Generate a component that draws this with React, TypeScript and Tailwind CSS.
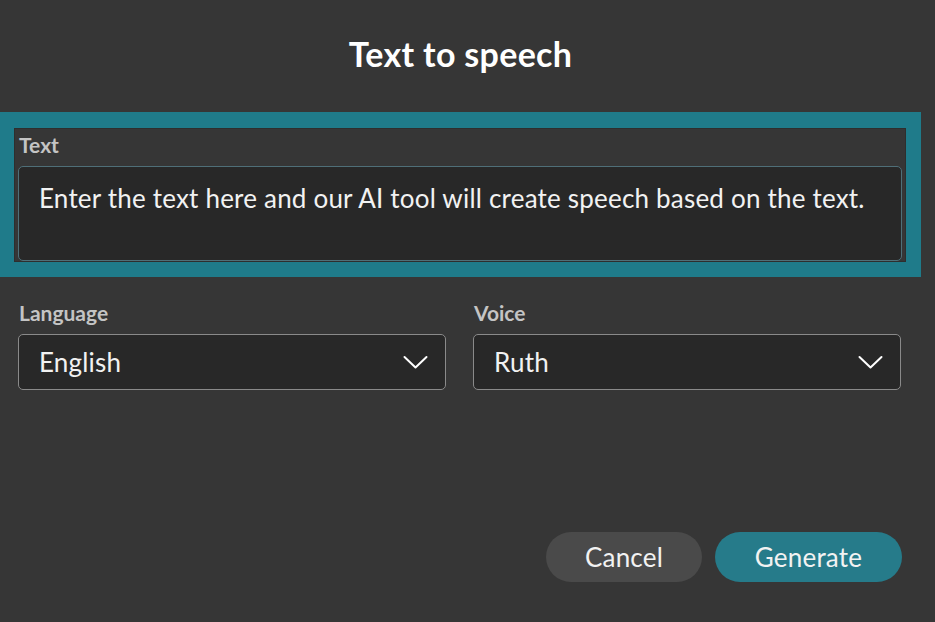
function Chevron() {
  return (
    <svg width="25" height="15" viewBox="0 0 25 15" fill="none" className="text-white">
      <polyline points="1.5,2 12.5,12.5 23.5,2" stroke="currentColor" strokeWidth="2" strokeLinecap="round" strokeLinejoin="round" />
    </svg>
  )
}

function Select({ label, value }: { label: string; value: string }) {
  return (
    <div className="flex w-[428px] flex-col">
      <span className="h-[37px] pl-px pt-[4px] text-[21px] font-bold leading-[24px] text-[#c4c4c4]">
        {label}
      </span>
      <div className="flex h-[56px] items-center justify-between rounded-[5px] border border-[#8a8a8a] bg-[#282828] pl-[20px] pr-[17px]">
        <span className="text-[26px] tracking-[0.2px] text-[#f2f2f2]">{value}</span>
        <Chevron />
      </div>
    </div>
  )
}

export default function App() {
  return (
    <div
      className="flex h-[622px] w-[935px] flex-col bg-[#363636]"
      style={{ fontFamily: 'Lato, "Noto Sans", sans-serif' }}
    >
      <div className="flex h-[112px] w-[921px] items-center justify-center pb-[6px]">
        <h1 className="text-[34px] font-bold tracking-[0.3px] text-white">Text to speech</h1>
      </div>

      <div className="w-[921px] bg-[#1f7b8a] pb-[15px] pl-[14px] pr-[15px] pt-[16px]">
        <div className="flex h-[134px] flex-col border border-[#2e2e2e] bg-[#363636] px-[3px]">
          <span className="h-[37px] pl-[1px] pt-[4px] text-[21px] font-bold leading-[24px] text-[#c4c4c4]">
            Text
          </span>
          <div className="h-[95px] rounded-[5px] border border-[#4f6f78] bg-[#282828] px-[20px] pt-[15px]">
            <p className="text-[26px] leading-[32px] tracking-[0.2px] text-[#f2f2f2]">
              Enter the text here and our AI tool will create speech based on the text.
            </p>
          </div>
        </div>
      </div>

      <div className="flex gap-[27px] pl-[18px] pt-[20px]">
        <Select label="Language" value="English" />
        <Select label="Voice" value="Ruth" />
      </div>

      <div className="mt-auto flex justify-end gap-[13px] pb-[40px] pr-[33px]">
        <button className="h-[50px] w-[156px] rounded-full bg-[#4a4a4a] text-[26px] tracking-[0.2px] text-[#f2f2f2]">
          Cancel
        </button>
        <button className="h-[50px] w-[187px] rounded-full bg-[#267b8a] text-[26px] tracking-[0.2px] text-[#f2f2f2]">
          Generate
        </button>
      </div>
    </div>
  )
}
